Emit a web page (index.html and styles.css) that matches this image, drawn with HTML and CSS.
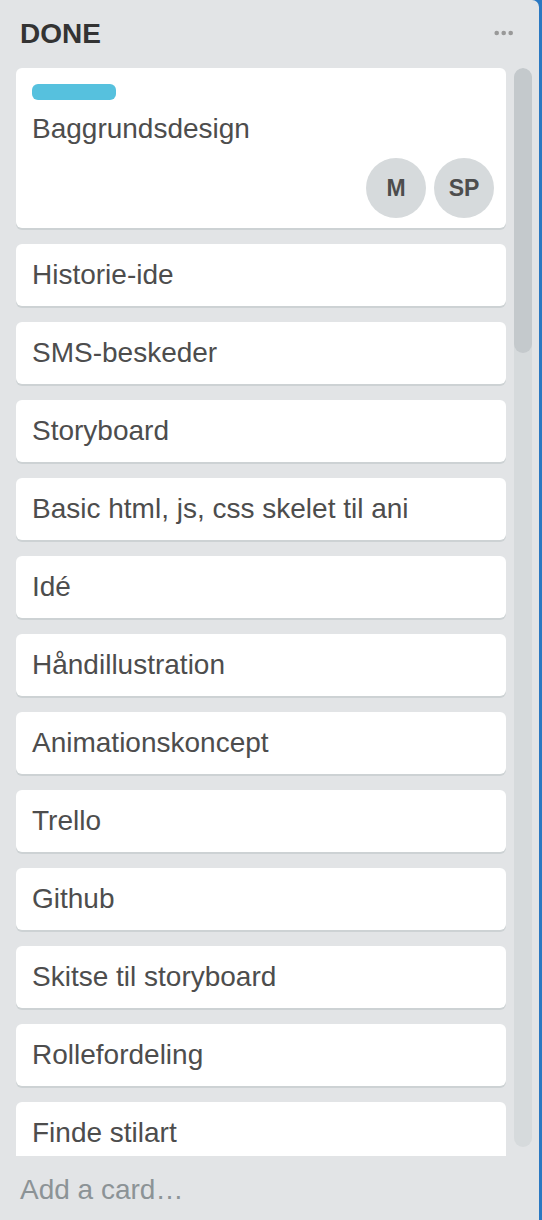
FILE: index.html
```html
<!DOCTYPE html>
<html lang="da">
<head>
<meta charset="utf-8">
<title>DONE</title>
<link rel="stylesheet" href="styles.css">
</head>
<body>
<div class="list">
  <div class="list-header">
    <h2 class="list-title">DONE</h2>
    <svg class="list-menu" width="20" height="6" viewBox="0 0 20 6" aria-hidden="true">
      <circle cx="2.7" cy="3" r="2.3" fill="#999"/>
      <circle cx="9.7" cy="3" r="2.3" fill="#999"/>
      <circle cx="16.7" cy="3" r="2.3" fill="#999"/>
    </svg>
  </div>
  <div class="list-body">
    <div class="cards">
      <div class="card card-big">
        <span class="label label-sky"></span>
        <div class="card-title">Baggrundsdesign</div>
        <div class="members">
          <span class="avatar">M</span>
          <span class="avatar">SP</span>
        </div>
      </div>
      <div class="card"><div class="card-title">Historie-ide</div></div>
      <div class="card"><div class="card-title">SMS-beskeder</div></div>
      <div class="card"><div class="card-title">Storyboard</div></div>
      <div class="card"><div class="card-title">Basic html, js, css skelet til ani</div></div>
      <div class="card"><div class="card-title">Idé</div></div>
      <div class="card"><div class="card-title">Håndillustration</div></div>
      <div class="card"><div class="card-title">Animationskoncept</div></div>
      <div class="card"><div class="card-title">Trello</div></div>
      <div class="card"><div class="card-title">Github</div></div>
      <div class="card"><div class="card-title">Skitse til storyboard</div></div>
      <div class="card"><div class="card-title">Rollefordeling</div></div>
      <div class="card"><div class="card-title">Finde stilart</div></div>
    </div>
    <div class="scrollbar"><div class="scroll-thumb"></div></div>
  </div>
  <div class="add-card">Add a card…</div>
</div>
</body>
</html>
```
FILE: styles.css
```css
html, body {
  margin: 0;
  padding: 0;
}
body {
  background: #2a78c2;
  width: 542px;
  height: 1220px;
  overflow: hidden;
  font-family: "Liberation Sans", Arial, Helvetica, sans-serif;
}
.list {
  width: 539px;
  height: 1220px;
  background: #e2e4e6;
  border-top-right-radius: 7px;
  display: flex;
  flex-direction: column;
}
.list-header {
  height: 68px;
  box-sizing: border-box;
  padding: 14px 0 0 20px;
  display: flex;
  justify-content: space-between;
  align-items: flex-start;
}
.list-title {
  margin: 0;
  font-size: 28px;
  line-height: 40px;
  font-weight: bold;
  color: #333;
}
.list-menu {
  margin: 16px 25px 0 0;
}
.list-body {
  display: flex;
  height: 1088px;
}
.cards {
  width: 490px;
  margin-left: 16px;
  height: 1088px;
  overflow: hidden;
}
.card {
  background: #fff;
  border-radius: 6px;
  box-shadow: 0 2px 0 #cdd2d4;
  height: 62px;
  box-sizing: border-box;
  padding: 11px 16px;
  margin-bottom: 16px;
}
.card-title {
  font-size: 28px;
  line-height: 40px;
  color: #4d4d4d;
  white-space: nowrap;
}
.card-big {
  height: 160px;
  padding: 16px 12px 10px 16px;
}
.label {
  display: block;
  width: 84px;
  height: 16px;
  border-radius: 6px;
}
.label-sky {
  background: #56c1de;
}
.card-big .card-title {
  margin-top: 9px;
}
.members {
  display: flex;
  justify-content: flex-end;
  gap: 8px;
  margin-top: 9px;
}
.avatar {
  width: 60px;
  height: 60px;
  border-radius: 50%;
  background: #d6dadc;
  color: #4d4d4d;
  font-weight: bold;
  font-size: 23px;
  display: flex;
  align-items: center;
  justify-content: center;
}
.scrollbar {
  margin-left: 8px;
  width: 18px;
  height: 1079px;
  border-radius: 9px;
  background: #d6dadc;
  overflow: hidden;
}
.scroll-thumb {
  height: 285px;
  border-radius: 9px;
  background: #c4c9cc;
}
.add-card {
  padding: 14px 0 0 20px;
  font-size: 28px;
  line-height: 40px;
  color: #8c9396;
}
```
